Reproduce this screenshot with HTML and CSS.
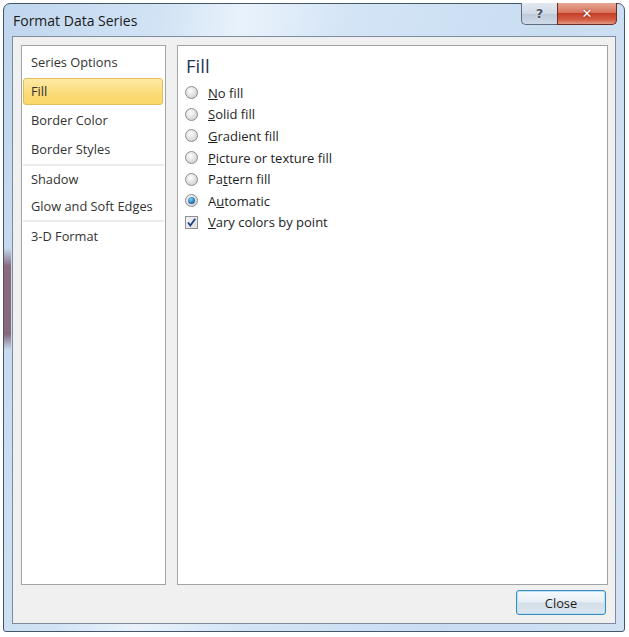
FILE: index.html
```html
<!DOCTYPE html>
<html lang="en">
<head>
    <meta charset="UTF-8">
    <meta name="viewport" content="width=device-width, initial-scale=1.0">
    <title>Format Data Series</title>
<link rel="stylesheet" href="styles.css">
</head>
<body>
<div class="window">
    <div class="titlebar">
        <span class="title">Format Data Series</span>
        <div class="caption-buttons">
            <button class="cap-btn help" type="button">?</button>
            <button class="cap-btn close" type="button">&#x2715;</button>
        </div>
    </div>

    <div class="client">
        <div class="panes">
            <!-- left list of categories -->
            <ul class="nav">
                <li class="nav-item">Series Options</li>
                <li class="nav-item selected">Fill</li>
                <li class="nav-item">Border Color</li>
                <li class="nav-item">Border Styles</li>
                <li class="separator"></li>
                <li class="nav-item tight">Shadow</li>
                <li class="nav-item tight">Glow and Soft Edges</li>
                <li class="separator"></li>
                <li class="nav-item">3-D Format</li>
            </ul>

            <div class="content">
                <h3 class="heading">Fill</h3>
                <label class="option"><span class="radio"></span><span><u>N</u>o fill</span></label>
                <label class="option"><span class="radio"></span><span><u>S</u>olid fill</span></label>
                <label class="option"><span class="radio"></span><span><u>G</u>radient fill</span></label>
                <label class="option"><span class="radio"></span><span><u>P</u>icture or texture fill</span></label>
                <label class="option"><span class="radio"></span><span>Pa<u>t</u>tern fill</span></label>
                <label class="option"><span class="radio checked"></span><span>A<u>u</u>tomatic</span></label>
                <label class="option">
                    <span class="checkbox">
                        <svg width="11" height="11" viewBox="0 0 11 11"><path d="M2 5.5 L4.3 8.5 L9.2 1.8" fill="none" stroke="#1d3e86" stroke-width="1.8"/></svg>
                    </span>
                    <span><u>V</u>ary colors by point</span>
                </label>
            </div>
        </div>

        <div class="footer">
            <button class="btn" type="button">Close</button>
        </div>
    </div>
</div>
</body>
</html>
```

FILE: styles.css
```css
*{box-sizing: border-box;}
body{
    margin: 0;
    background-color: #ffffff;
    font-family: "Open Sans", "DejaVu Sans", sans-serif;
    font-size: 12.8px;
    color: #1e1e1e;
}
.window{
    margin: 3px 0 0 3px;
    width: 622px;
    height: 629px;
    border: 1px solid #46566a;
    border-radius: 7px 7px 3px 3px;
    padding: 0 8px 7px 8px;
    display: flex;
    flex-direction: column;
    background:
        linear-gradient(to bottom, transparent 244px, #8b6a80 262px, #86687c 330px, transparent 346px) left top / 7px 100% no-repeat,
        linear-gradient(100deg, #c0d6ee 0%, #d2e3f5 22%, #e9f2fb 33%, #d3e4f6 48%, #c9ddf1 75%, #d0e2f4 100%);
}
.titlebar{
    height: 32px;
    display: flex;
    align-items: center;
    position: relative;
}
.title{
    padding-left: 1px;
    padding-top: 1px;
    font-size: 14px;
    color: #1a1a1a;
}
.caption-buttons{
    position: absolute;
    top: -1px;
    right: -1px;
    display: flex;
}
.cap-btn{
    height: 22px;
    border: 1px solid #5e6b7c;
    border-top: none;
    padding: 0;
    font-family: "DejaVu Sans", sans-serif;
    font-weight: bold;
    color: #ffffff;
}
.help{
    width: 36px;
    border-radius: 0 0 0 5px;
    border-right: none;
    background: linear-gradient(#e3e9f0, #d0dae6 50%, #bcc9d8 51%, #cfdbe8);
    color: #4a5564;
    font-size: 13px;
    text-shadow: 0 0 2px #ffffff;
}
.close{
    width: 60px;
    border-color: #6d2a20;
    border-radius: 0 0 5px 0;
    background: linear-gradient(#e7a895, #d8745e 45%, #c53f26 50%, #d45d44 80%, #e29a84);
    font-size: 13px;
    text-shadow: 0 0 2px #5a1a10;
}
.client{
    flex: 1;
    background-color: #f0f0f0;
    border: 1px solid #7d8c9e;
    padding: 8px 7px 8px 8px;
    display: flex;
    flex-direction: column;
}
.panes{
    display: grid;
    grid-template-columns: 145px 431px;
    gap: 11px;
    height: 540px;
}
.nav{
    list-style: none;
    margin: 0;
    padding: 2px 0 0 0;
    background-color: #ffffff;
    border: 1px solid #a3a3a3;
}
.nav-item{
    height: 27px;
    line-height: 25px;
    margin: 1px 2px 2px 1px;
    padding-left: 7px;
    border: 1px solid transparent;
    border-radius: 3px;
    color: #333333;
}
.nav-item.tight{
    height: 25px;
    line-height: 23px;
}
.selected{
    border-color: #e3bd5c;
    background: linear-gradient(#fdeaa4, #fbdb78 60%, #fcd868);
}
.separator{
    height: 2px;
    margin: -1px 1px 1px 1px;
    background-color: #ebebeb;
}
.content{
    background-color: #ffffff;
    border: 1px solid #a3a3a3;
    padding: 8px 0 0 7px;
}
.heading{
    margin: 0 0 4px 0;
    padding-left: 1px;
    font-size: 18.5px;
    font-weight: normal;
    line-height: 24px;
    color: #1d3457;
}
.option{
    height: 21.6px;
    display: flex;
    align-items: center;
    gap: 10px;
    font-size: 13px;
    color: #1e1e1e;
}
.radio{
    width: 13px;
    height: 13px;
    border: 1px solid #8d8d8d;
    border-radius: 50%;
    background: radial-gradient(circle at 40% 35%, #ffffff, #e4e4e4 45%, #c6c6c6 100%);
    display: flex;
    align-items: center;
    justify-content: center;
}
.radio.checked::after{
    content: "";
    width: 7px;
    height: 7px;
    border-radius: 50%;
    background: radial-gradient(circle at 40% 35%, #7fd0f5, #2a7cb8 55%, #14436e);
}
.checkbox{
    width: 13px;
    height: 13px;
    border: 1px solid #8e8f8f;
    background: linear-gradient(135deg, #f4f4f4, #dedede);
    display: flex;
    align-items: center;
    justify-content: center;
}
.checkbox svg{
    display: block;
}
.footer{
    display: flex;
    justify-content: flex-end;
    padding-top: 5px;
    padding-right: 2px;
}
.btn{
    width: 90px;
    height: 25px;
    border: 1px solid #3c8bbd;
    border-radius: 3px;
    background: linear-gradient(#f6fafd, #e6eef5 48%, #d5dfe8 52%, #dbe5ee);
    box-shadow: inset 0 0 0 1px #b9e2f8;
    font-family: "Open Sans", "DejaVu Sans", sans-serif;
    font-size: 12.8px;
    color: #1e1e1e;
    padding: 0;
}
```
